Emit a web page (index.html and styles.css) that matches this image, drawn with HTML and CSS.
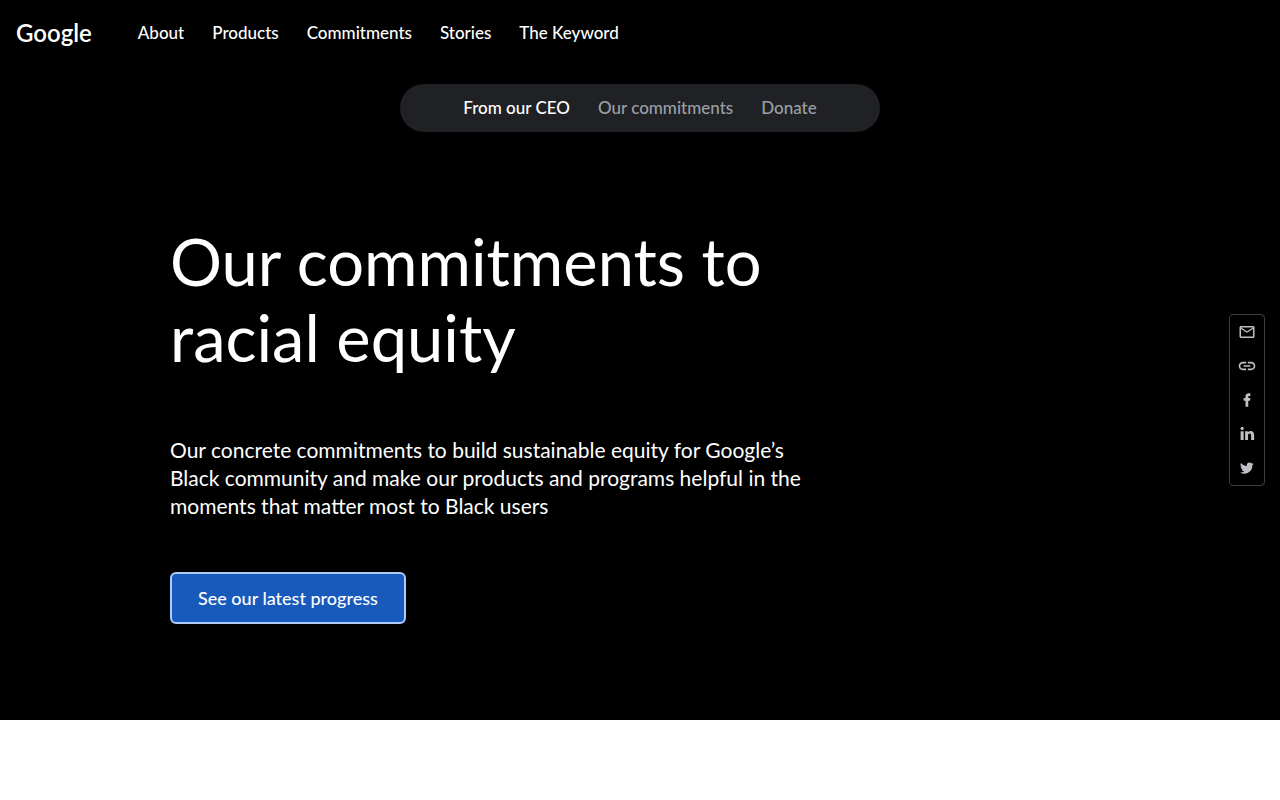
FILE: index.html
```html
<!DOCTYPE html>
<html lang="en">
<head>
<meta charset="utf-8">
<meta name="viewport" content="width=device-width, initial-scale=1">
<title>Our commitments to racial equity</title>
<link rel="stylesheet" href="styles.css">
</head>
<body>
<div class="stage">
  <header class="site-header">
    <a class="logo" href="#">Google</a>
    <nav class="site-nav" aria-label="Main">
      <a href="#">About</a>
      <a href="#">Products</a>
      <a href="#">Commitments</a>
      <a href="#">Stories</a>
      <a href="#">The Keyword</a>
    </nav>
  </header>
  <nav class="jump-nav" aria-label="On this page">
    <a class="current" href="#">From our CEO</a>
    <a href="#">Our commitments</a>
    <a href="#">Donate</a>
  </nav>
  <main class="hero">
    <h1 class="hero-title">Our commitments to racial equity</h1>
    <p class="hero-text">Our concrete commitments to build sustainable equity for Google’s Black community and make our products and programs helpful in the moments that matter most to Black users</p>
    <a class="cta" href="#">See our latest progress</a>
  </main>
</div>
<aside class="share" aria-label="Share">
  <a href="#" aria-label="Email"><svg viewBox="0 0 24 24"><path d="M22 6c0-1.100-.9-2-2-2H4c-1.100 0-2 .9-2 2v12c0 1.100.9 2 2 2h16c1.100 0 2-.9 2-2V6zm-2 0l-8 5-8-5h16zm0 12H4V8l8 5 8-5v10z"/></svg></a>
  <a href="#" aria-label="Copy link"><svg class="wide" viewBox="0 0 24 24"><path d="M3.900 12c0-1.710 1.390-3.100 3.100-3.100h4V7H7c-2.760 0-5 2.240-5 5s2.240 5 5 5h4v-1.900H7c-1.710 0-3.100-1.390-3.100-3.100zM8 13h8v-2H8v2zm9-6h-4v1.900h4c1.710 0 3.100 1.390 3.100 3.100s-1.390 3.100-3.100 3.100h-4V17h4c2.760 0 5-2.240 5-5s-2.240-5-5-5z"/></svg></a>
  <a href="#" aria-label="Facebook"><svg viewBox="0 0 24 24"><path d="M10 21V13H7.500V9.300H10V7.500C10 4.200 12 3 14.300 3c1 0 1.800.1 2.200.2v3.300h-1.200c-1.300 0-1.600.7-1.600 1.700v1.100h2.800L16 13h-2.300v8z"/></svg></a>
  <a href="#" aria-label="LinkedIn"><svg viewBox="0 0 24 24"><path d="M3.500 8.200h4V20h-4zM5.500 2.300a2.200 2.200 0 1 1 0 4.400 2.200 2.200 0 0 1 0-4.400zM9.500 8.200h3.700v1.600c.6-1.100 1.900-1.900 3.600-1.900 3.700 0 4.700 2.400 4.700 5.700V20h-4v-5.700c0-1.500 0-3-1.900-3s-2.200 1.500-2.200 3V20H9.500z"/></svg></a>
  <a href="#" aria-label="Twitter"><svg class="small" viewBox="0 0 24 24"><path d="M23.500 4.800c-.8.400-1.800.6-2.700.8 1-.6 1.700-1.500 2.100-2.600-.9.500-1.900.9-3 1.100a4.800 4.800 0 0 0-8.200 4.400C7.700 8.300 4.100 6.400 1.700 3.500a4.800 4.800 0 0 0 1.500 6.400c-.8 0-1.500-.2-2.200-.6v.1c0 2.300 1.700 4.200 3.900 4.700-.7.200-1.500.2-2.200.1a4.800 4.800 0 0 0 4.500 3.300A9.700 9.700 0 0 1 .1 19.500 13.600 13.600 0 0 0 21.100 7.300c1-.7 1.800-1.500 2.400-2.500z"/></svg></a>
</aside>
</body>
</html>
```
FILE: styles.css
```css
* { box-sizing: border-box; }

body {
  margin: 0;
  background: #fff;
  color: #fff;
  font-family: Lato, "Open Sans", sans-serif;
  font-size: 17px;
  line-height: 24px;
}

a { color: inherit; text-decoration: none; }

.stage {
  min-height: 90vh;
  padding-bottom: 96px;
  background: #000;
}

.site-header {
  display: flex;
  align-items: center;
  gap: 46px;
  height: 66px;
  padding: 0 16px;
}

.logo {
  font-size: 24px;
  font-weight: 600;
}

.site-nav {
  display: flex;
  gap: 28px;
  font-weight: 500;
}

.jump-nav {
  display: flex;
  justify-content: center;
  gap: 28px;
  width: fit-content;
  margin: 18px auto 0;
  padding: 12px 63px;
  border-radius: 24px;
  background: #202124;
  color: #9aa0a6;
  font-weight: 500;
}

.jump-nav .current { color: #fff; }

.hero {
  max-width: 940px;
  margin: 0 auto;
  padding-top: 91px;
}

.hero-title {
  max-width: 640px;
  margin: 0;
  font-size: 65px;
  font-weight: 400;
  line-height: 76px;
}

.hero-text {
  max-width: 640px;
  margin: 61px 0 52px;
  font-size: 21px;
  line-height: 28px;
}

.cta {
  display: inline-block;
  padding: 12px 26px;
  border: 2px solid #aecbfa;
  border-radius: 6px;
  background: #185abc;
  font-size: 18px;
  font-weight: 500;
}

.share {
  position: fixed;
  top: 50%;
  right: 15px;
  transform: translateY(-50%);
  display: flex;
  flex-direction: column;
  width: 36px;
  border: 1px solid #3c4043;
  border-radius: 4px;
  background: #000;
}

.share a {
  display: grid;
  place-items: center;
  height: 34px;
}

.share svg {
  width: 18px;
  height: 18px;
  fill: #bdc1c6;
}

.share .wide {
  width: 20px;
  height: 20px;
}

.share .small {
  width: 14px;
  height: 14px;
}
```
